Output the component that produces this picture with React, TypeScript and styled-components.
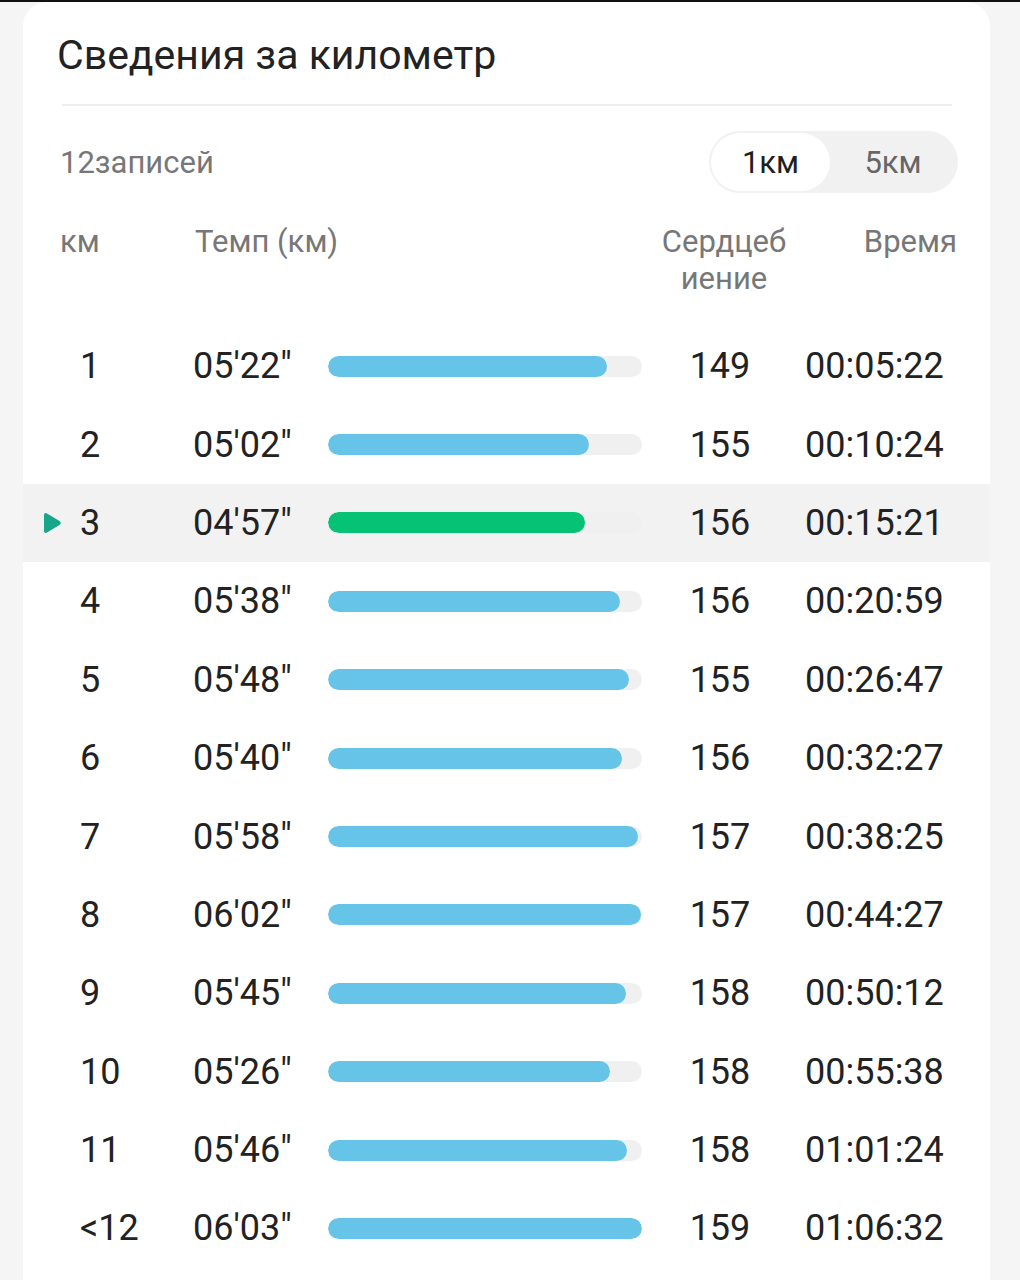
import styled, { createGlobalStyle } from "styled-components";

const GlobalStyle = createGlobalStyle`
  body {
    margin: 0;
    background: #f5f5f5;
    font-family: Roboto, "Liberation Sans", sans-serif;
  }
`;

interface ISplit {
  km: string;
  pace: string;
  heart: number;
  time: string;
  active?: boolean;
}

const splits: ISplit[] = [
  { km: "1", pace: "05'22\"", heart: 149, time: "00:05:22" },
  { km: "2", pace: "05'02\"", heart: 155, time: "00:10:24" },
  { km: "3", pace: "04'57\"", heart: 156, time: "00:15:21", active: true },
  { km: "4", pace: "05'38\"", heart: 156, time: "00:20:59" },
  { km: "5", pace: "05'48\"", heart: 155, time: "00:26:47" },
  { km: "6", pace: "05'40\"", heart: 156, time: "00:32:27" },
  { km: "7", pace: "05'58\"", heart: 157, time: "00:38:25" },
  { km: "8", pace: "06'02\"", heart: 157, time: "00:44:27" },
  { km: "9", pace: "05'45\"", heart: 158, time: "00:50:12" },
  { km: "10", pace: "05'26\"", heart: 158, time: "00:55:38" },
  { km: "11", pace: "05'46\"", heart: 158, time: "01:01:24" },
  { km: "<12", pace: "06'03\"", heart: 159, time: "01:06:32" },
];

const toSeconds = (pace: string) => {
  const [m, s] = pace.replace('"', "").split("'");
  return Number(m) * 60 + Number(s);
};

const slowest = Math.max(...splits.map((s) => toSeconds(s.pace)));

const Page = styled.div`
  min-height: 1280px;
  border-top: 2px solid #111;
  box-sizing: border-box;
  padding-left: 23px;
  padding-right: 30px;
`;

const Card = styled.section`
  background: #fff;
  border-radius: 24px 24px 0 0;
  min-height: 1278px;
  padding-top: 28px;
`;

const Title = styled.h1`
  margin: 0 0 0 34px;
  font-size: 41px;
  line-height: 50px;
  font-weight: 400;
  color: #222;
`;

const Divider = styled.hr`
  margin: 24px 38px 0 39px;
  border: none;
  height: 2px;
  background: #eeeeee;
`;

const Toolbar = styled.div`
  display: flex;
  align-items: center;
  justify-content: space-between;
  margin-top: 25px;
  padding: 0 32px 0 37px;
`;

const Count = styled.span`
  font-size: 31px;
  color: #777;
`;

const Toggle = styled.div`
  display: flex;
  height: 62px;
  width: 249px;
  box-sizing: border-box;
  padding: 2px;
  border-radius: 31px;
  background: #f1f1f1;
`;

const ToggleItem = styled.button<{ $on?: boolean; $w: number }>`
  width: ${(p) => p.$w}px;
  border: none;
  margin: 0;
  padding: 0;
  border-radius: 29px;
  background: ${(p) => (p.$on ? "#fff" : "transparent")};
  color: ${(p) => (p.$on ? "#1e1e1e" : "#666")};
  font: inherit;
  font-size: 31px;
  cursor: pointer;
`;

const HeadRow = styled.div`
  display: flex;
  align-items: flex-start;
  margin-top: 30px;
  height: 104px;
  padding-left: 37px;
  font-size: 31px;
  line-height: 37px;
  color: #777;
`;

const HeadCell = styled.div<{ $w: number; $align?: string }>`
  width: ${(p) => p.$w}px;
  flex-shrink: 0;
  text-align: ${(p) => p.$align || "left"};
`;

const Row = styled.div<{ $active?: boolean }>`
  display: flex;
  align-items: center;
  height: 78.4px;
  background: ${(p) => (p.$active ? "#f2f2f2" : "transparent")};
  font-size: 36px;
  color: #222;
`;

const Marker = styled.div`
  width: 57px;
  display: flex;
  justify-content: flex-end;
  padding-right: 18px;
  box-sizing: border-box;
  flex-shrink: 0;
`;

const Cell = styled.div<{ $w: number; $align?: string; $pad?: number }>`
  width: ${(p) => p.$w}px;
  flex-shrink: 0;
  box-sizing: border-box;
  padding-left: ${(p) => p.$pad || 0}px;
  text-align: ${(p) => p.$align || "left"};
`;

const Track = styled.div`
  width: 314px;
  height: 21px;
  border-radius: 11px;
  background: #f0f0f0;
  flex-shrink: 0;
  overflow: hidden;
`;

const Fill = styled.div<{ $active?: boolean }>`
  height: 100%;
  border-radius: 11px;
  background: ${(p) => (p.$active ? "#06c274" : "#66c4e8")};
`;

function Triangle() {
  return (
    <svg width="20" height="24" viewBox="0 0 20 24">
      <path
        d="M2 4.5 Q2 1 5 2.6 L17.5 10 Q20 12 17.5 14 L5 21.4 Q2 23 2 19.5 Z"
        fill="#17a68a"
      />
    </svg>
  );
}

function App() {
  return (
    <>
      <GlobalStyle />
      <Page>
        <Card>
          <Title>Сведения за километр</Title>
          <Divider />
          <Toolbar>
            <Count>12записей</Count>
            <Toggle>
              <ToggleItem $on $w={119}>
                1км
              </ToggleItem>
              <ToggleItem $w={126}>5км</ToggleItem>
            </Toggle>
          </Toolbar>
          <HeadRow>
            <HeadCell $w={135}>км</HeadCell>
            <HeadCell $w={430}>Темп (км)</HeadCell>
            <HeadCell $w={198} $align="center">
              Сердцеб
              <br />
              иение
            </HeadCell>
            <HeadCell $w={134} $align="right">
              Время
            </HeadCell>
          </HeadRow>
          {splits.map((s) => (
            <Row key={s.km} $active={s.active}>
              <Marker>{s.active && <Triangle />}</Marker>
              <Cell $w={113}>{s.km}</Cell>
              <Cell $w={135}>{s.pace}</Cell>
              <Track>
                <Fill
                  $active={s.active}
                  style={{ width: `${(toSeconds(s.pace) / slowest) * 100}%` }}
                />
              </Track>
              <Cell $w={156} $align="center">
                {s.heart}
              </Cell>
              <Cell $w={157} $pad={7}>
                {s.time}
              </Cell>
            </Row>
          ))}
        </Card>
      </Page>
    </>
  );
}

export default App;
